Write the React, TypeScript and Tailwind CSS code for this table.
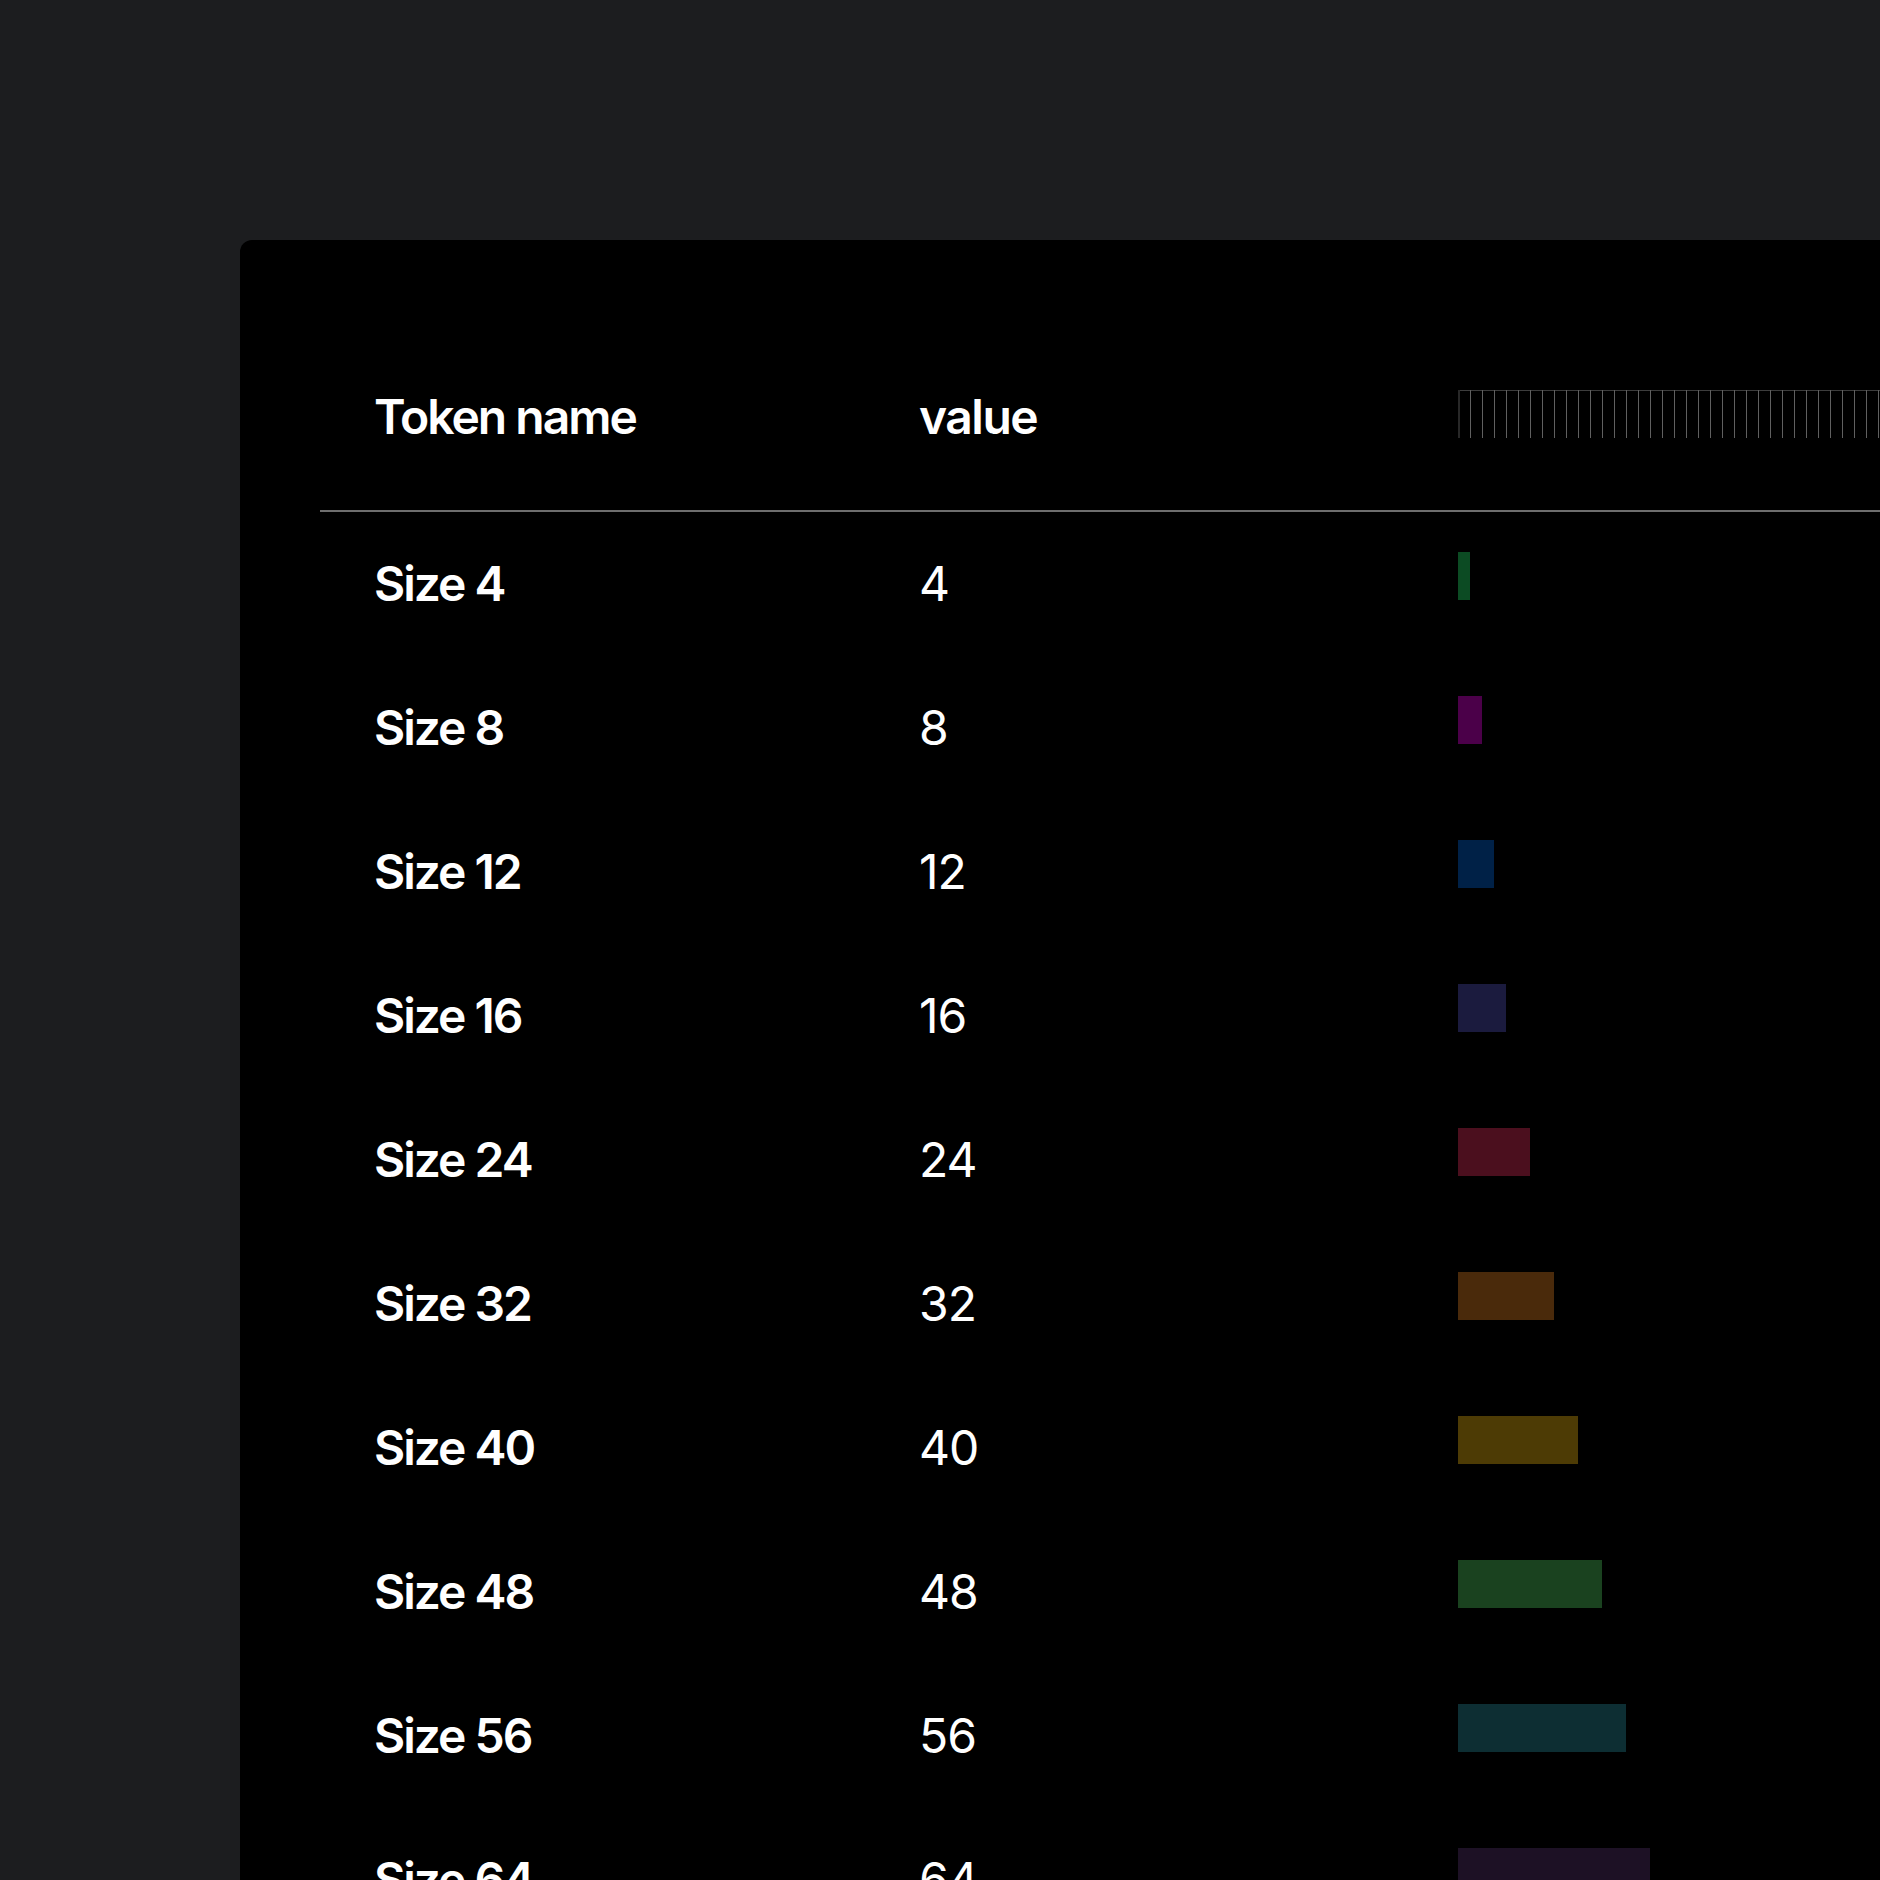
const tokens = [
  { name: "Size 4", value: 4, color: "bg-[#0c4b23]" },
  { name: "Size 8", value: 8, color: "bg-[#4b0049]" },
  { name: "Size 12", value: 12, color: "bg-[#002147]" },
  { name: "Size 16", value: 16, color: "bg-[#1b1b3e]" },
  { name: "Size 24", value: 24, color: "bg-[#4b0f1e]" },
  { name: "Size 32", value: 32, color: "bg-[#4a2a0b]" },
  { name: "Size 40", value: 40, color: "bg-[#4d3b05]" },
  { name: "Size 48", value: 48, color: "bg-[#1a421f]" },
  { name: "Size 56", value: 56, color: "bg-[#0d2e33]" },
  { name: "Size 64", value: 64, color: "bg-[#1d1125]" },
  { name: "Size 80", value: 80, color: "bg-[#3a0d2e]" },
]

function Ruler() {
  const ticks = Array.from({ length: 40 }, (_, i) => i + 1)
  return (
    <svg width="480" height="48" viewBox="0 0 480 48" className="block">
      <line x1="0" y1="0.5" x2="480" y2="0.5" stroke="#3d3d3d" strokeWidth="1" />
      <rect x="0" y="0" width="2" height="48" fill="#282828" />
      {ticks.map((t) => (
        <line key={t} x1={t * 12 + 0.5} y1="0" x2={t * 12 + 0.5} y2="48" stroke="#606060" strokeWidth="1" />
      ))}
    </svg>
  )
}

export default function App() {
  return (
    <div className="h-[1880px] w-full overflow-hidden bg-[#1c1d1f] pl-[240px] pt-[240px] font-['Inter',sans-serif] text-white">
      <div className="w-[1800px] min-h-[1800px] rounded-[12px] bg-black p-[80px]">
        {/* header */}
        <div className="flex h-[192px] items-center border-b-2 border-[#6e6e6e] pb-[2px]">
          <div className="w-[544px] shrink-0 pl-[54px] pt-[5px] text-[48px] font-semibold leading-[48px] tracking-[-2px]">
            Token name
          </div>
          <div className="w-[538px] shrink-0 pl-[55px] pt-[5px] text-[48px] font-semibold leading-[48px] tracking-[-1.5px]">
            value
          </div>
          <div className="pl-[56px]">
            <Ruler />
          </div>
        </div>

        {/* rows */}
        {tokens.map((t) => (
          <div key={t.name} className="flex h-[144px] items-start">
            <div className="w-[544px] shrink-0 pl-[54px] pt-[48px] text-[48px] font-semibold leading-[48px] tracking-[-2px]">
              {t.name}
            </div>
            <div className="w-[538px] shrink-0 pl-[55px] pt-[48px] text-[48px] font-normal leading-[48px] tracking-[-1px]">
              {t.value}
            </div>
            <div className="pl-[56px] pt-[40px]">
              <div className={`h-[48px] ${t.color}`} style={{ width: t.value * 3 }} />
            </div>
          </div>
        ))}
      </div>
    </div>
  )
}
